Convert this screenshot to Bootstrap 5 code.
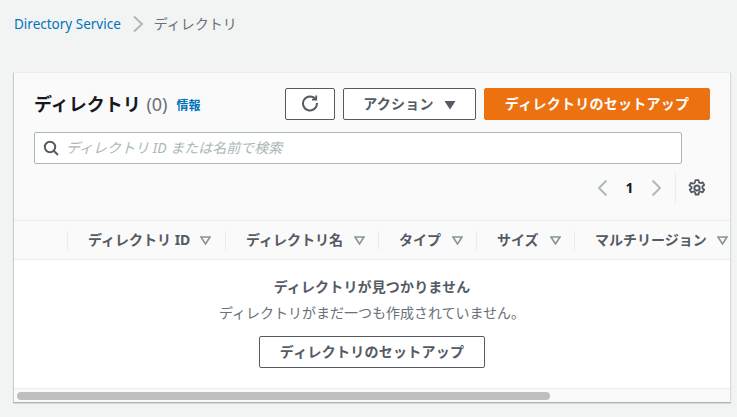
<!DOCTYPE html>
<html lang="ja">
<head>
<meta charset="utf-8">
<title>ディレクトリ</title>
<link href="https://cdn.jsdelivr.net/npm/bootstrap@5.3.0/dist/css/bootstrap.min.css" rel="stylesheet">
<style>
html,body{height:100%;overflow:hidden}
body{background:#f2f3f3;font-family:"Noto Sans","Noto Sans CJK JP",sans-serif;font-size:14px;line-height:20px;color:#545b64}
.crumbs{height:72px;padding:14px 14px 0;font-size:14px;color:#687078}
.crumbs a{color:#0073bb;text-decoration:none;font-size:13.5px}
.crumb-sep{margin:0 10px 0 11px}
.panel-box{margin:0 6px 0 13px;height:331px;background:#fff;border-left:1px solid #c6cbcb;border-right:1px solid #d5dbdb;border-bottom:1px solid #a9b3b3;border-top:1px solid #eaeded;box-shadow:0 1px 1px rgba(0,31,63,.1);overflow:hidden}
.head-zone{background:#fafafa;height:147px;padding:15px 20px 0 20px}
.ttl{font-size:18px;font-weight:700;color:#16191f;line-height:32px}
.ttl-count{font-weight:400;color:#687078;font-size:18px;margin-left:1px}
.inf{font-size:12px;font-weight:700;color:#0073bb;text-decoration:none;margin:3px 0 0 9px}
.aw-btn{height:32px;border:1px solid #545b64;border-radius:2px;background:#fff;color:#545b64;font-weight:700;font-size:14px;line-height:30px;padding:0;text-align:center;letter-spacing:.25px}
.aw-btn:hover{background:#fff;color:#545b64;border-color:#545b64}
.b-refresh{width:50px;margin-right:8px}
.b-action{width:133px;margin-right:8px}
.act-tri{margin-left:10px}
.b-primary{width:226px;background:#ec7211;border-color:#ec7211;color:#fff}
.b-primary:hover{background:#ec7211;border-color:#ec7211;color:#fff}
.search-row{width:648px;height:32px;margin-top:12px;background:#fff;border:1px solid #aab7b8;border-radius:2px;padding-left:8px;gap:7px}
.search-ph{font-style:italic;color:#aab7b8;font-size:14px}
.pager{height:32px;margin-top:8px;color:#16191f;padding-right:4px}
.pg-num{font-weight:700;font-size:14px;width:43px;text-align:center}
.pg-split{height:32px;border-left:1px solid #eaeded;margin:0 12px}
.col-strip{height:40px;background:#fafafa;border-top:1px solid #eaeded;border-bottom:1px solid #eaeded;font-weight:700;font-size:14px;white-space:nowrap}
.hcell{height:19px;border-left:1px solid #eaeded;flex:none;padding-left:20px}
.hcell-tri{margin-left:11px;flex:none}
.c1 .hcell-tri,.c5 .hcell-tri{margin-left:10px}
.empty-zone{height:128px;background:#fff;text-align:center;padding-top:17px}
.empty-title{font-weight:700;font-size:14px;line-height:20px;letter-spacing:.15px}
.empty-text{font-size:14px;line-height:20px;margin-top:6px;color:#687078}
.b-empty{width:226px;margin-top:13px;display:inline-block}
.scroll-zone{height:15px;background:#fafafa;border-top:1px solid #eaeded;padding-top:3px}
.scroll-thumb{height:8px;width:533px;margin-left:3px;border-radius:4px;background:#bfbfbf}
.c1{margin-left:53px;width:158px}.c2{width:153px}.c3{width:98px}.c4{width:98px}.c5{width:156px}
</style>
</head>
<body>
<nav class="crumbs d-flex align-items-start">
  <a href="#">Directory Service</a>
  <svg class="crumb-sep" width="12" height="20" viewBox="0 0 12 20" fill="none" stroke="#aab7b8" stroke-width="1.8"><path d="M2 2.5l8 7.5-8 7.5"/></svg>
  <span>ディレクトリ</span>
</nav>
<main class="panel-box">
  <div class="head-zone">
    <div class="d-flex align-items-center justify-content-between">
      <div class="d-flex align-items-center">
        <span class="ttl">ディレクトリ <span class="ttl-count">(0)</span></span>
        <a class="inf" href="#">情報</a>
      </div>
      <div class="d-flex">
        <button class="btn aw-btn b-refresh" aria-label="更新"><svg width="18" height="18" viewBox="0 0 18 18" fill="none" stroke="#545b64" stroke-width="2" style="vertical-align:-3px"><path d="M14.6 5.2A7 7 0 1 0 16 9"/><path d="M15.2 1.5v4.2h-4.2" stroke-width="1.8"/></svg></button>
        <button class="btn aw-btn b-action">アクション<svg class="act-tri" width="12" height="10" viewBox="0 0 12 10"><path d="M0.5 1h11L6 9.5z" fill="#545b64"/></svg></button>
        <button class="btn aw-btn b-primary">ディレクトリのセットアップ</button>
      </div>
    </div>
    <div class="search-row d-flex align-items-center">
      <svg width="16" height="16" viewBox="0 0 16 16" fill="none" stroke="#545b64" stroke-width="2"><circle cx="7" cy="7" r="5.2"/><path d="M11 11l4 4"/></svg>
      <span class="search-ph">ディレクトリ ID または名前で検索</span>
    </div>
    <div class="pager d-flex align-items-center justify-content-end">
      <svg width="12" height="18" viewBox="0 0 12 18" fill="none" stroke="#aab7b8" stroke-width="1.8"><path d="M10.5 1.5L3 9l7.5 7.5"/></svg>
      <span class="pg-num">1</span>
      <svg width="12" height="18" viewBox="0 0 12 18" fill="none" stroke="#aab7b8" stroke-width="1.8"><path d="M1.5 1.5L9 9l-7.5 7.5"/></svg>
      <span class="pg-split"></span>
      <svg width="18" height="18" viewBox="0 0 18 18" fill="none" stroke="#545b64"><circle cx="9" cy="9" r="2.6" stroke-width="2"/><path d="M7.5 1.2h3l.5 2.3 1.5.7 2.1-.9 1.6 2.7-1.8 1.5v1.7l1.8 1.5-1.6 2.7-2.1-.9-1.5.7-.5 2.3h-3l-.5-2.3-1.5-.7-2.1.9-1.6-2.7 1.8-1.5V8L1.4 6.5 3 3.8l2.1.9 1.5-.7z" stroke-width="1.8" stroke-linejoin="round"/></svg>
    </div>
  </div>
  <div class="col-strip d-flex align-items-center">
    <div class="hcell c1 d-flex align-items-center">ディレクトリ ID<svg class="hcell-tri" width="11" height="9" viewBox="0 0 11 9"><path d="M1 1h9L5.5 8z" fill="none" stroke="#879596" stroke-width="1.6"/></svg></div>
    <div class="hcell c2 d-flex align-items-center">ディレクトリ名<svg class="hcell-tri" width="11" height="9" viewBox="0 0 11 9"><path d="M1 1h9L5.5 8z" fill="none" stroke="#879596" stroke-width="1.6"/></svg></div>
    <div class="hcell c3 d-flex align-items-center">タイプ<svg class="hcell-tri" width="11" height="9" viewBox="0 0 11 9"><path d="M1 1h9L5.5 8z" fill="none" stroke="#879596" stroke-width="1.6"/></svg></div>
    <div class="hcell c4 d-flex align-items-center">サイズ<svg class="hcell-tri" width="11" height="9" viewBox="0 0 11 9"><path d="M1 1h9L5.5 8z" fill="none" stroke="#879596" stroke-width="1.6"/></svg></div>
    <div class="hcell c5 d-flex align-items-center">マルチリージョン<svg class="hcell-tri" width="11" height="9" viewBox="0 0 11 9"><path d="M1 1h9L5.5 8z" fill="none" stroke="#879596" stroke-width="1.6"/></svg></div>
  </div>
  <div class="empty-zone">
    <div class="empty-title">ディレクトリが見つかりません</div>
    <div class="empty-text">ディレクトリがまだ一つも作成されていません。</div>
    <button class="btn aw-btn b-empty">ディレクトリのセットアップ</button>
  </div>
  <div class="scroll-zone"><div class="scroll-thumb"></div></div>
</main>
<script src="https://cdn.jsdelivr.net/npm/bootstrap@5.3.0/dist/js/bootstrap.bundle.min.js"></script>
</body>
</html>
